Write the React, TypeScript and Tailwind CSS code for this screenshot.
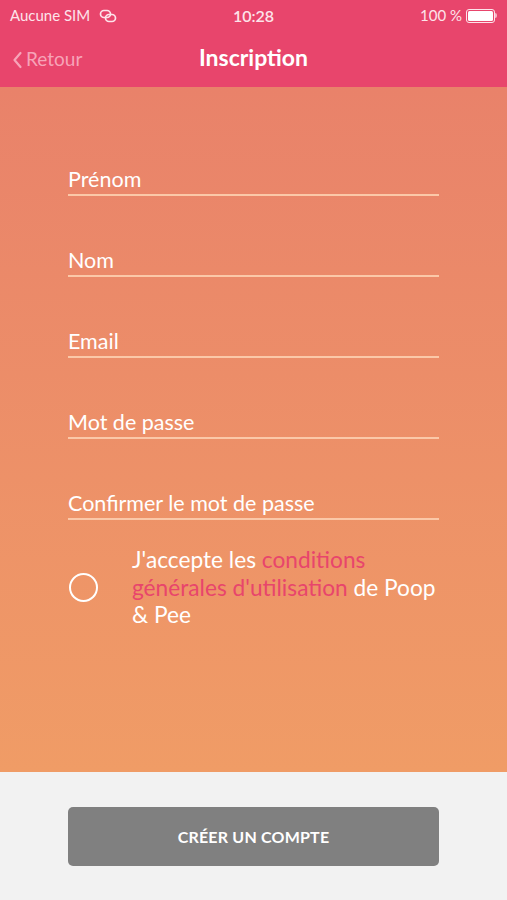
import React from 'react';

const fields = ['Prénom', 'Nom', 'Email', 'Mot de passe', 'Confirmer le mot de passe'];

function StatusBar() {
  return (
    <div className="relative flex items-center justify-between h-[31px] px-[10px] text-[#fde3ea] text-[15px]">
      <div className="flex items-center gap-[9px]">
        <span>Aucune SIM</span>
        <svg width="18" height="14" viewBox="0 0 18 14" fill="none" stroke="#fde3ea" strokeWidth="1.7">
          <rect x="1.5" y="1.5" width="10" height="7" rx="3.5" />
          <rect x="6.5" y="5.5" width="10" height="7" rx="3.5" />
        </svg>
      </div>
      <span className="absolute left-1/2 -translate-x-1/2 font-semibold text-[16px]">10:28</span>
      <div className="flex items-center gap-[4px]">
        <span>100 %</span>
        <div className="flex items-center">
          <div className="w-[29px] h-[14px] rounded-[3px] border border-[#fde3ea] p-[1px]">
            <div className="w-full h-full bg-white rounded-[1.5px]" />
          </div>
          <div className="w-[2px] h-[5px] bg-[#fde3ea]/70 rounded-r-sm" />
        </div>
      </div>
    </div>
  );
}

export default function App() {
  return (
    <div
      className="w-[507px] h-[900px] flex flex-col bg-[#f2f2f2]"
      style={{ fontFamily: 'Lato, "Open Sans", sans-serif' }}
    >
      <div className="bg-[#e8456c]">
        <StatusBar />
        <div className="relative flex items-center h-[56px] px-[12px] pb-[3px]">
          <div className="flex items-center gap-[3px] text-[#f7a3b8] text-[19px] mt-[4px]">
            <svg width="11" height="18" viewBox="0 0 11 18" fill="none" stroke="#f7a3b8" strokeWidth="2.2" strokeLinecap="round" strokeLinejoin="round">
              <path d="M8.5 2 L2.5 9 L8.5 16" />
            </svg>
            <span>Retour</span>
          </div>
          <span className="absolute left-1/2 -translate-x-1/2 text-white font-bold text-[23px]">Inscription</span>
        </div>
      </div>

      <div className="h-[685px] bg-gradient-to-b from-[#e9826a] to-[#f09c66] px-[68px] pt-[28px]">
        <div className="flex flex-col w-[371px]">
          {fields.map((f) => (
            <div key={f} className="h-[81px] flex flex-col justify-end">
              <div className="border-b-2 border-[#fbc8a8] pb-[2px]">
                <span className="block text-white text-[21.5px] leading-[26px]">{f}</span>
              </div>
            </div>
          ))}
        </div>
        <div className="flex items-center mt-[26px] w-[371px]">
          <div className="w-[29px] h-[29px] rounded-full border-2 border-white shrink-0 ml-[1px]" />
          <p className="ml-[34px] text-white text-[22.7px] leading-[27.5px]">
            J'accepte les <span className="text-[#e8456c]">conditions générales d'utilisation</span> de Poop &amp; Pee
          </p>
        </div>
      </div>

      <div className="flex-1 flex justify-center pt-[35px]">
        <button className="w-[371px] h-[59px] rounded-[5px] bg-[#808080] text-white font-bold text-[16px] tracking-[0.2px]">
          CRÉER UN COMPTE
        </button>
      </div>
    </div>
  );
}
